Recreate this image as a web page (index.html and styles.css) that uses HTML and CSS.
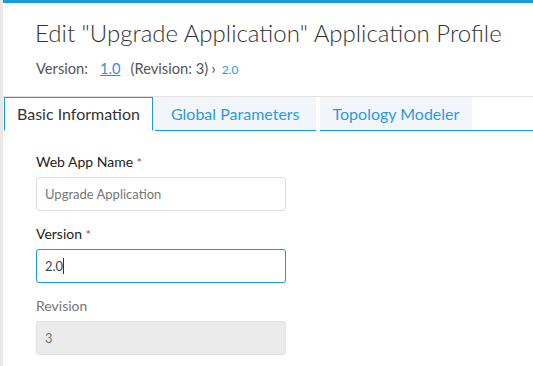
FILE: index.html
```html
<!DOCTYPE html>
<html>
<head>
<meta charset="utf-8">
<link rel="stylesheet" href="styles.css">
</head>
<body>
<div class="frame">
  <div class="strip"></div>
  <div class="main">
    <div class="header">
      <h1 class="title">Edit "Upgrade Application" Application Profile</h1>
      <div class="version-line">
        <span class="v-label">Version:</span>
        <a class="v-link">1.0</a>
        <span class="v-rev">(Revision: 3)</span>
        <span class="v-chev">›</span>
        <span class="v-new">2.0</span>
      </div>
    </div>
    <div class="tabs">
      <div class="tab active">Basic Information</div>
      <div class="tab wide">Global Parameters</div>
      <div class="tab">Topology Modeler</div>
      <div class="tab-fill"></div>
    </div>
    <div class="form">
      <div class="field">
        <label class="label">Web App Name <span class="req">*</span></label>
        <div class="input">Upgrade Application</div>
      </div>
      <div class="field">
        <label class="label">Version <span class="req">*</span></label>
        <div class="input focus"><span class="val">2.0</span><span class="caret"></span></div>
      </div>
      <div class="field">
        <label class="label muted">Revision</label>
        <div class="input disabled">3</div>
      </div>
    </div>
  </div>
</div>
</body>
</html>
```
FILE: styles.css
```css
* { box-sizing: border-box; }
html, body { margin: 0; padding: 0; background: #fff; }
body { font-family: Lato, "Open Sans", sans-serif; color: #333; }
.frame { display: flex; height: 366px; overflow: hidden; }
.strip { width: 3px; background: #e8e8e8; flex: none; }
.main { flex: 1; border-top: 3px solid #1a9ad6; display: flex; flex-direction: column; }
.main > * { flex: none; }
.header { padding: 15px 0 0 32px; height: 94px; border-bottom: 1px solid #e2e2e2; }
.title { margin: 0; font-size: 24px; font-weight: 300; color: #333; line-height: 30px; }
.version-line { margin-top: 11px; font-size: 14.7px; color: #555; display: flex; align-items: baseline; line-height: 18px; }
.v-label { margin-right: 12px; margin-left: 1px; }
.v-link { color: #3a8ccf; text-decoration: underline; margin-right: 10px; }
.v-rev { margin-right: 3px; }
.v-chev { color: #555; margin-right: 6px; font-size: 16px; }
.v-new { color: #2e9ad8; font-size: 12px; }
.tabs { display: flex; height: 34px; padding-left: 1px; }
.tab { height: 34px; padding: 0 13px; font-size: 16px; line-height: 33px; color: #2d9ad8; background: #f2f6fb; border-bottom: 1px solid #1a9ad6; margin-right: 4px; }
.tab.wide { padding: 0 16px; }
.tab.active { background: #fff; color: #333; border: 1px solid #1a9ad6; border-bottom: 1px solid #fff; padding: 0 12px; line-height: 32px; margin-right: 2px; }
.tab-fill { flex: 1; border-bottom: 1px solid #1a9ad6; margin-left: -4px; }
.form { padding: 22px 0 0 33px; }
.label { display: block; font-size: 14px; color: #222; line-height: 18px; height: 18px; }
.label.muted { color: #777; }
.req { color: #d0263a; font-size: 12px; }
.input { width: 250px; height: 34px; margin-top: 6px; margin-bottom: 14px; border: 1px solid #ddd; border-radius: 3px; padding: 0 8px; font-size: 13px; color: #777; background: #fff; display: flex; align-items: center; }
.input.focus { border-color: #1a9ad6; color: #444; }
.caret { display: inline-block; width: 1px; height: 16px; background: #333; }
.input.disabled { background: #ebebeb; border-color: #e2e2e2; color: #777; }
```
